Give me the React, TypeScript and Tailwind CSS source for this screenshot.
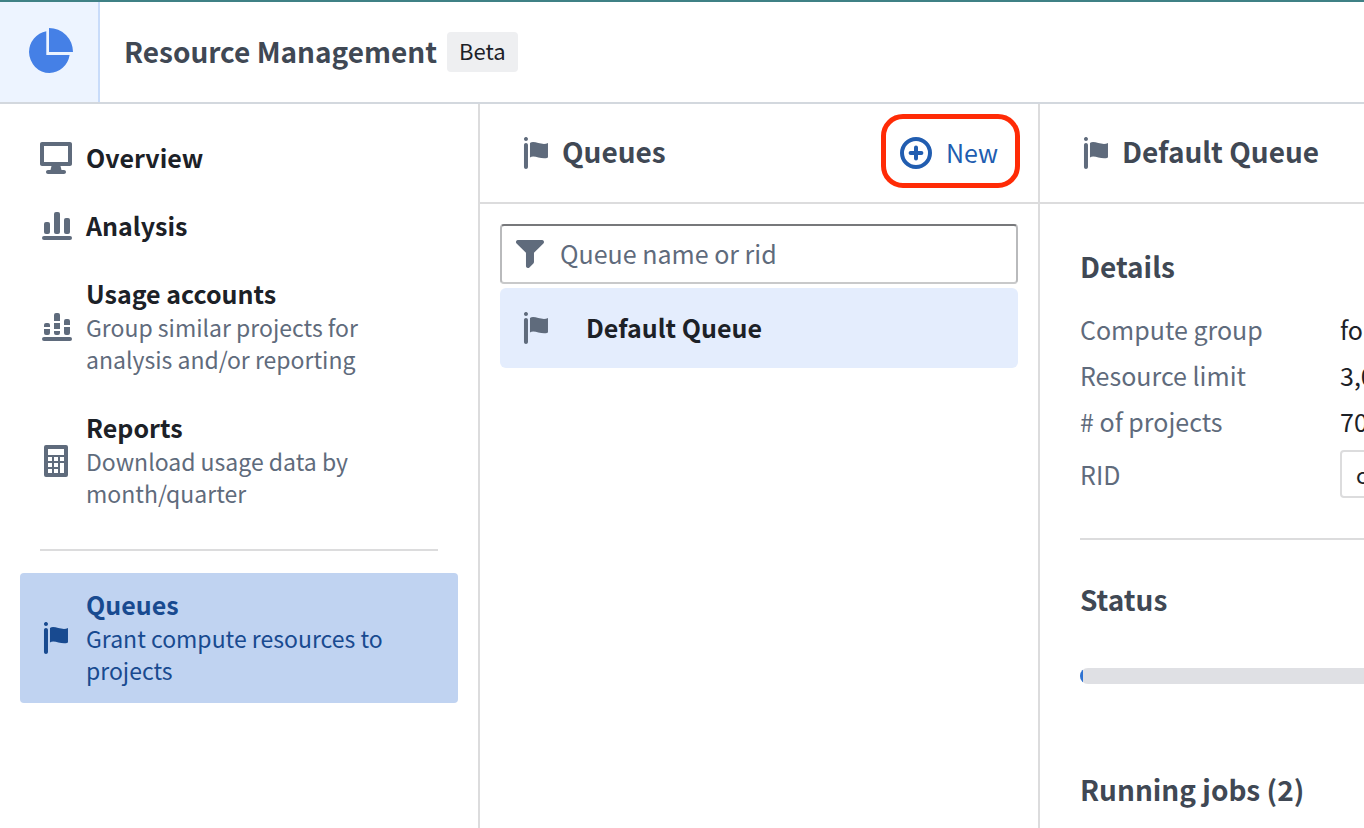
import type { ReactNode } from "react";

type IconProps = { className?: string };

function Glyph({ className = "", children }: IconProps & { children: ReactNode }) {
  return (
    <svg viewBox="0 0 16 16" fill="currentColor" aria-hidden="true" className={`size-8 shrink-0 ${className}`}>
      {children}
    </svg>
  );
}

function FlagIcon({ className }: IconProps) {
  return (
    <Glyph className={className}>
      <path d="M2.99 2.99c-.55 0-1 .45-1 1v11c0 .55.45 1 1 1s1-.45 1-1v-11c0-.55-.45-1-1-1zm0-3c-.55 0-1 .45-1 1s.45 1 1 1 1-.45 1-1-.45-1-1-1zm2 3.03v7.23c2.07-1.7 5.92 1.5 9 0V3.02c-3 1.6-6.94-1.6-9 0z" />
    </Glyph>
  );
}

function DesktopIcon() {
  return (
    <Glyph>
      <path d="M15 0H1C.45 0 0 .45 0 1v10c0 .55.45 1 1 1h4.75l-.5 2H4c-.55 0-1 .45-1 1s.45 1 1 1h8c.55 0 1-.45 1-1s-.45-1-1-1h-1.25l-.5-2H15c.55 0 1-.45 1-1V1c0-.55-.45-1-1-1zm-1 10H2V2h12v8z" />
    </Glyph>
  );
}

function BarsIcon() {
  return (
    <Glyph>
      <rect x="2" y="6" width="3" height="6" rx="1" />
      <rect x="7" y="1" width="3" height="11" rx="1" />
      <rect x="12" y="4" width="3" height="8" rx="1" />
      <rect x="1" y="13" width="15" height="2" rx="1" />
    </Glyph>
  );
}

function GroupedBarsIcon() {
  return (
    <Glyph>
      <path d="M3 6h1a1 1 0 0 1 1 1v1H2V7a1 1 0 0 1 1-1zM2 9h3v2a1 1 0 0 1-1 1H3a1 1 0 0 1-1-1z" />
      <path d="M8 1h1a1 1 0 0 1 1 1v3H7V2a1 1 0 0 1 1-1zM7 6h3v3H7zM7 10h3v1a1 1 0 0 1-1 1H8a1 1 0 0 1-1-1z" />
      <path d="M13 4h1a1 1 0 0 1 1 1v2h-3V5a1 1 0 0 1 1-1zM12 8h3v3a1 1 0 0 1-1 1h-1a1 1 0 0 1-1-1z" />
      <rect x="1" y="13" width="15" height="2" rx="1" />
    </Glyph>
  );
}

function CalculatorIcon() {
  return (
    <Glyph>
      <path
        fillRule="evenodd"
        d="M3 0h10a1 1 0 0 1 1 1v14a1 1 0 0 1-1 1H3a1 1 0 0 1-1-1V1a1 1 0 0 1 1-1zM4 2v3h8V2zM4 6v2h2V6zM7 6v2h2V6zM10 6v2h2V6zM4 9v2h2V9zM7 9v2h2V9zM10 9v5h2V9zM4 12v2h2v-2zM7 12v2h2v-2z"
      />
    </Glyph>
  );
}

function FilterIcon() {
  return (
    <Glyph>
      <path d="M13.99.99h-12a1.003 1.003 0 00-.71 1.71l4.71 4.71V14a1.003 1.003 0 001.71.71l2-2c.18-.18.29-.43.29-.71V7.41L14.7 2.7a1.003 1.003 0 00-.71-1.71z" />
    </Glyph>
  );
}

function AddIcon() {
  return (
    <Glyph>
      <circle cx="8" cy="8" r="7" fill="none" stroke="currentColor" strokeWidth="2" />
      <path d="M8 5.3v5.4M5.3 8h5.4" stroke="currentColor" strokeWidth="2" strokeLinecap="round" />
    </Glyph>
  );
}

function PieIcon() {
  return (
    <svg viewBox="0 0 50 50" fill="#4580e6" aria-hidden="true" className="size-[50px]">
      <path d="M25 1a24 24 0 0 1 24 24H25z" />
      <path d="M22.300 4.200V28h23.300A20.500 21.500 0 0 1 25.500 46 20.500 21.500 0 0 1 5 25 21.500 21.500 0 0 1 22.300 4.200z" />
    </svg>
  );
}

type NavItemProps = { icon: ReactNode; title: string; text?: string; active?: boolean };

function NavItem({ icon, title, text, active = false }: NavItemProps) {
  return (
    <a
      href="#"
      aria-current={active ? "page" : undefined}
      className={`flex items-center gap-3.5 rounded-[4px] py-[15px] pr-10 pl-5 ${
        active ? "bg-[#c0d3f1] text-[#184a90]" : "text-[#5f6b7c]"
      }`}
    >
      {icon}
      <span className="flex flex-col gap-0.5 pb-0.5">
        <span className={`text-[25px] leading-8 font-bold ${active ? "" : "text-[#1c2127]"}`}>{title}</span>
        {text && <span className="text-[23px] leading-8">{text}</span>}
      </span>
    </a>
  );
}

function PanelHeader({ title, children }: { title: string; children?: ReactNode }) {
  return (
    <header className="flex h-[100px] items-center border-b-2 border-[#dcdcdd] pr-[18px] pl-10 text-[#5f6b7c]">
      <FlagIcon />
      <h2 className="ml-2.5 grow pb-1 text-[28px] leading-10 font-bold whitespace-nowrap text-[#404854]">{title}</h2>
      {children}
    </header>
  );
}

function Heading({ children }: { children: ReactNode }) {
  return <h3 className="text-[28px] leading-10 font-bold text-[#404854]">{children}</h3>;
}

function Detail({ label, children }: { label: string; children: ReactNode }) {
  return (
    <div className="flex items-center">
      <dt className="w-[260px] shrink-0 text-[#5f6b7c]">{label}</dt>
      <dd className="text-[#1c2127]">{children}</dd>
    </div>
  );
}

export default function App() {
  return (
    <div className="flex h-screen flex-col overflow-hidden border-t-2 border-[#3f8185] bg-white font-['Noto_Sans_CJK_SC',sans-serif] text-[25px]">
      <header className="flex h-[102px] shrink-0 items-stretch border-b-2 border-[#d3d8de]">
        <div className="flex w-[100px] items-center justify-center border-r-2 border-[#c9dcfa] bg-[#edf4ff]">
          <PieIcon />
        </div>
        <div className="flex items-center gap-2.5 pl-6">
          <h1 className="pb-0.5 text-[28px] leading-10 font-bold whitespace-nowrap text-[#404854]">
            Resource Management
          </h1>
          <span className="rounded-[4px] bg-[#eeeff1] px-3 pb-1 text-[22px] leading-9 text-[#1c2127]">Beta</span>
        </div>
      </header>

      <div className="flex min-h-0 grow">
        <nav className="w-[480px] shrink-0 border-r-2 border-[#dcdcdd] px-5 pt-[22px]">
          <div className="flex flex-col gap-1">
            <NavItem icon={<DesktopIcon />} title="Overview" />
            <NavItem icon={<BarsIcon />} title="Analysis" />
            <NavItem
              icon={<GroupedBarsIcon />}
              title="Usage accounts"
              text="Group similar projects for analysis and/or reporting"
            />
            <NavItem icon={<CalculatorIcon />} title="Reports" text="Download usage data by month/quarter" />
          </div>
          <hr className="mx-5 mt-[23px] mb-[22px] border-t-2 border-[#dcdcdd]" />
          <NavItem icon={<FlagIcon />} title="Queues" text="Grant compute resources to projects" active />
        </nav>

        <section className="w-[560px] shrink-0 border-r-2 border-[#dcdcdd]">
          <PanelHeader title="Queues">
            <button
              type="button"
              className="mb-1 flex h-[74px] items-center gap-3.5 rounded-[22px] border-[5px] border-[#ff2b06] pt-1 pr-[17px] pl-3.5 text-[25px] text-[#215db0]"
            >
              <AddIcon />
              New
            </button>
          </PanelHeader>
          <div className="flex flex-col gap-1 p-5">
            <label className="flex h-[60px] items-center gap-3.5 rounded-[4px] border-2 border-t-[#77787b] border-r-[#b9babc] border-b-[#c8c9ca] border-l-[#b9babc] px-3 text-[#5f6b7c]">
              <FilterIcon />
              <input
                type="text"
                aria-label="Queue name or rid"
                placeholder="Queue name or rid"
                className="min-w-0 grow pb-0.5 text-[25px] leading-10 outline-none placeholder:text-[#5f6b7c]"
              />
            </label>
            <button
              type="button"
              className="flex h-20 items-center gap-[34px] rounded-[6px] bg-[#e4edfd] px-5 text-[25px] font-bold text-[#1c2127]"
            >
              <FlagIcon className="text-[#5f6b7c]" />
              Default Queue
            </button>
          </div>
        </section>

        <section className="min-w-0 grow overflow-hidden">
          <PanelHeader title="Default Queue" />
          <div className="pt-[42px] pl-10">
            <Heading>Details</Heading>
            <dl className="mt-5 text-[25px] leading-[46px] whitespace-nowrap">
              <Detail label="Compute group">foundry</Detail>
              <Detail label="Resource limit">3,000 vCPUs</Detail>
              <Detail label="# of projects">70</Detail>
              <div className="pt-1.5">
                <Detail label="RID">
                  <span className="flex h-12 items-center rounded-[4px] border-2 border-[#dcdcdd] px-3.5 text-[22px]">
                    compute
                  </span>
                </Detail>
              </div>
            </dl>
            <hr className="mt-10 border-t-2 border-[#dcdcdd]" />
            <div className="mt-[39px]">
              <Heading>Status</Heading>
            </div>
            <div
              role="progressbar"
              aria-label="Status"
              aria-valuenow={1}
              className="mt-[49px] h-4 overflow-hidden rounded-l-full bg-[#dfe0e4]"
            >
              <div className="h-full w-[3px] bg-[#2d72d2]" />
            </div>
            <div className="mt-[85px]">
              <Heading>Running jobs (2)</Heading>
            </div>
          </div>
        </section>
      </div>
    </div>
  );
}
